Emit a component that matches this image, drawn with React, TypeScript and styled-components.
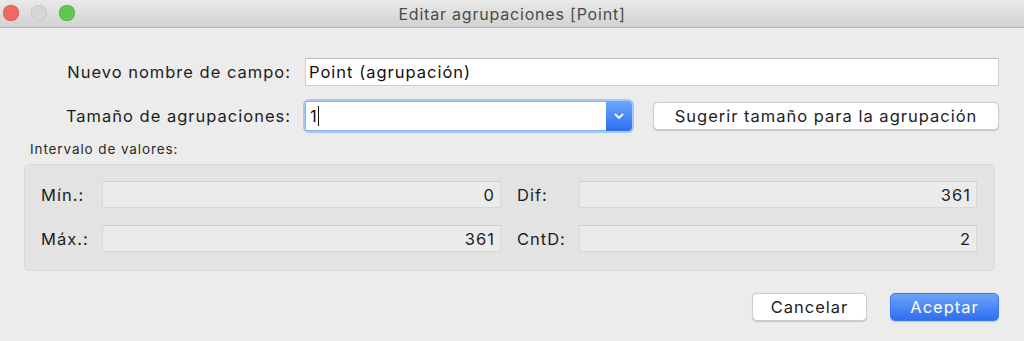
import styled, { createGlobalStyle } from "styled-components";

const GlobalStyle = createGlobalStyle`
  html, body {
    margin: 0;
    padding: 0;
    background: #ececec;
  }
  body {
    font-family: Inter, "Noto Sans", "Liberation Sans", sans-serif;
    color: #1f1f1f;
    -webkit-font-smoothing: antialiased;
  }
`;

const TitleBar = () => (
  <Bar>
    <Lights>
      <Light $color="#ee6a5f" $border="#d8564b" />
      <Light $color="#d6d6d6" $border="#c2c2c2" />
      <Light $color="#62c554" $border="#4fab42" />
    </Lights>
    <Title>Editar agrupaciones [Point]</Title>
  </Bar>
);

const App = () => {
  return (
    <Window>
      <GlobalStyle />
      <TitleBar />
      <Content>
        <FormGrid>
          <Label>Nuevo nombre de campo:</Label>
          <TextField defaultValue="Point (agrupación)" />
          <Label>Tamaño de agrupaciones:</Label>
          <SizeRow>
            <Combo>
              <ComboInput>
                1<Caret />
              </ComboInput>
              <ComboButton>
                <svg width="10" height="7" viewBox="0 0 10 7">
                  <path d="M1.5 1.5 L5 5 L8.5 1.5" fill="none" stroke="#fff" strokeWidth="1.8" strokeLinecap="round" strokeLinejoin="round" />
                </svg>
              </ComboButton>
            </Combo>
            <PushButton $width={346}>Sugerir tamaño para la agrupación</PushButton>
          </SizeRow>
        </FormGrid>

        <SectionLabel>Intervalo de valores:</SectionLabel>
        <GroupBox>
          <GroupLabel>Mín.:</GroupLabel>
          <ValueField>0</ValueField>
          <GroupLabel>Dif:</GroupLabel>
          <ValueField>361</ValueField>
          <GroupLabel>Máx.:</GroupLabel>
          <ValueField>361</ValueField>
          <GroupLabel>CntD:</GroupLabel>
          <ValueField>2</ValueField>
        </GroupBox>

        <Footer>
          <PushButton $width={115}>Cancelar</PushButton>
          <PushButton $width={109} $primary>Aceptar</PushButton>
        </Footer>
      </Content>
    </Window>
  );
};

//  --- Styling ---
const Window = styled.div`
  width: 1024px;
  height: 341px;
  background: #ececec;
  overflow: hidden;
`;

const Bar = styled.div`
  position: relative;
  height: 28px;
  display: flex;
  align-items: center;
  justify-content: center;
  background: linear-gradient(#e9e9e9, #d2d2d2);
  border-bottom: 1px solid #b3b3b3;
  box-sizing: border-box;
`;

const Lights = styled.div`
  position: absolute;
  left: 3px;
  top: 5px;
  display: flex;
  gap: 12px;
`;

const Light = styled.span<{ $color: string; $border: string }>`
  width: 16px;
  height: 16px;
  border-radius: 50%;
  background: ${(p) => p.$color};
  box-shadow: inset 0 0 0 0.5px ${(p) => p.$border};
`;

const Title = styled.div`
  font-size: 16px;
  letter-spacing: 0.8px;
  color: #4b4b4b;
`;

const Content = styled.div`
  padding: 30px 25px 0 24px;
  display: flex;
  flex-direction: column;
  font-size: 16.5px;
  letter-spacing: 1px;
`;

const FormGrid = styled.div`
  display: grid;
  grid-template-columns: 267px 1fr;
  column-gap: 14px;
  row-gap: 15px;
  align-items: center;
`;

const Label = styled.label`
  justify-self: end;
  color: #1d1d1d;
`;

const TextField = styled.input`
  height: 28px;
  box-sizing: border-box;
  border: 1px solid #cfcfcf;
  border-top-color: #bdbdbd;
  background: #fff;
  font-family: inherit;
  font-size: inherit;
  letter-spacing: inherit;
  color: #111;
  padding: 0 3px;
  outline: none;
`;

const SizeRow = styled.div`
  display: flex;
  align-items: center;
  gap: 21px;
`;

const Combo = styled.div`
  display: flex;
  height: 30px;
  width: 327px;
  border-radius: 4px;
  box-shadow: 0 0 0 2px #a7c8f6;
`;

const ComboInput = styled.div`
  flex: 1;
  background: #fff;
  border: 1px solid #8fb4ec;
  border-right: none;
  display: flex;
  align-items: center;
  padding-left: 4px;
  color: #111;
`;

const Caret = styled.span`
  display: inline-block;
  width: 1px;
  height: 20px;
  background: #111;
`;

const ComboButton = styled.div`
  width: 26px;
  display: flex;
  align-items: center;
  justify-content: center;
  background: linear-gradient(#6aa7fa, #2d6ef2);
  border-radius: 0 4px 4px 0;
`;

const PushButton = styled.button<{ $width: number; $primary?: boolean }>`
  width: ${(p) => p.$width}px;
  height: 28px;
  border-radius: 5px;
  font-family: inherit;
  font-size: inherit;
  letter-spacing: inherit;
  padding: 0;
  cursor: default;
  color: ${(p) => (p.$primary ? "#fff" : "#222")};
  background: ${(p) => (p.$primary ? "linear-gradient(#6aa5fa, #2f6ef2)" : "#fff")};
  border: 1px solid ${(p) => (p.$primary ? "#3b79ef" : "#cccccc")};
  box-shadow: 0 0.5px 1px rgba(0, 0, 0, 0.18);
`;

const SectionLabel = styled.div`
  margin: 10px 0 0 6px;
  font-size: 13.5px;
  letter-spacing: 0.9px;
  color: #2a2a2a;
`;

const GroupBox = styled.div`
  margin-top: 7px;
  width: 971px;
  box-sizing: border-box;
  padding: 16px 17px 18px 16px;
  background: #e3e3e3;
  border: 1px solid #dadada;
  border-radius: 5px;
  display: grid;
  grid-template-columns: 61px 399px 78px 398px;
  row-gap: 17px;
  align-items: center;
  & > :nth-child(4n + 3) {
    padding-left: 16px;
  }
`;

const GroupLabel = styled.div`
  color: #1d1d1d;
`;

const ValueField = styled.div`
  height: 27px;
  box-sizing: border-box;
  background: #ebebeb;
  border: 1px solid #d8d8d8;
  border-top-color: #cfcfcf;
  display: flex;
  align-items: center;
  justify-content: flex-end;
  padding-right: 5px;
  color: #1d1d1d;
`;

const Footer = styled.div`
  margin-top: 22px;
  display: flex;
  justify-content: flex-end;
  gap: 23px;
`;

export default App;
